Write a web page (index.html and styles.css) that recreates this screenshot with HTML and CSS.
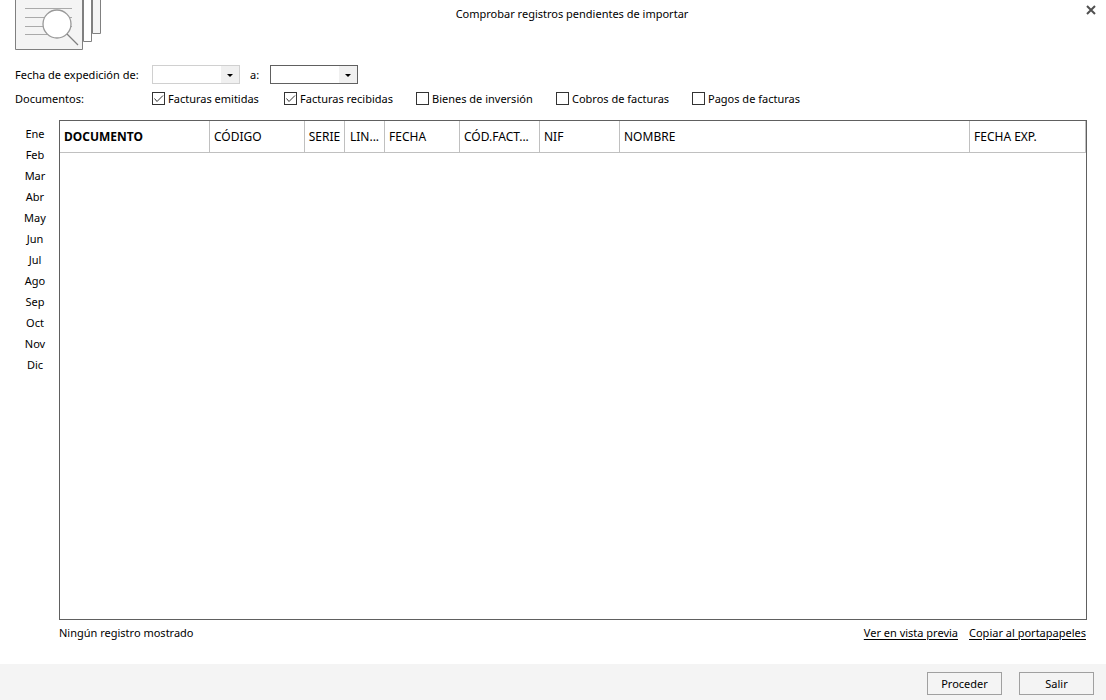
FILE: index.html
```
<!DOCTYPE html>
<html lang="es">
<head>
<meta charset="utf-8">
<title>Comprobar registros pendientes de importar</title>
<link rel="stylesheet" href="styles.css">
</head>
<body>
<header class="header">
  <svg class="logo" width="88" height="51" viewBox="0 0 88 51" fill="none" aria-hidden="true">
    <path d="M77.500 -2V33.500H85.500V-2" fill="#f4f4f4" stroke="#808080"/>
    <path d="M68.500 -2V41.500H76.500V-2" fill="#fff" stroke="#808080"/>
    <path d="M0.500 -2V49.500H67.500V-2Z" fill="#f4f4f4" stroke="#808080"/>
    <path d="M10 8.500H57M10 17.500H57M10 26.500H57M10 34.500H42" stroke="#aaa"/>
    <circle cx="42" cy="24" r="14" fill="#fff" stroke="#999" stroke-width="1.300"/>
    <path d="M52 34L63 45" stroke="#808080" stroke-width="1.200"/>
  </svg>
  <h1 class="title">Comprobar registros pendientes de importar</h1>
  <button class="close" type="button" aria-label="Cerrar">
    <svg width="10" height="10" viewBox="0 0 10 10" aria-hidden="true"><path d="M1 1L9 9M9 1L1 9" stroke="#505050" stroke-width="2"/></svg>
  </button>
</header>

<form class="filters">
  <label class="filter-label" for="from">Fecha de expedición de:</label>
  <div class="dates">
    <div class="combo combo-light">
      <input id="from" type="text">
      <button type="button" aria-label="Elegir fecha inicial"><svg width="6" height="3" viewBox="0 0 6 3"><path d="M0 0H6L3 3Z"/></svg></button>
    </div>
    <label class="to-label" for="to">a:</label>
    <div class="combo">
      <input id="to" type="text">
      <button type="button" aria-label="Elegir fecha final"><svg width="6" height="3" viewBox="0 0 6 3"><path d="M0 0H6L3 3Z"/></svg></button>
    </div>
  </div>
  <span class="filter-label">Documentos:</span>
  <div class="checks">
    <label class="check"><input type="checkbox" checked><svg class="tick" viewBox="0 0 13 13"><path d="M2.500 6.500L5 9.500L11 3.500"/></svg>Facturas emitidas</label>
    <label class="check"><input type="checkbox" checked><svg class="tick" viewBox="0 0 13 13"><path d="M2.500 6.500L5 9.500L11 3.500"/></svg>Facturas recibidas</label>
    <label class="check"><input type="checkbox"><svg class="tick" viewBox="0 0 13 13"><path d="M2.500 6.500L5 9.500L11 3.500"/></svg>Bienes de inversión</label>
    <label class="check"><input type="checkbox"><svg class="tick" viewBox="0 0 13 13"><path d="M2.500 6.500L5 9.500L11 3.500"/></svg>Cobros de facturas</label>
    <label class="check"><input type="checkbox"><svg class="tick" viewBox="0 0 13 13"><path d="M2.500 6.500L5 9.500L11 3.500"/></svg>Pagos de facturas</label>
  </div>
</form>

<main class="main">
  <nav class="months" aria-label="Meses">
    <button type="button">Ene</button>
    <button type="button">Feb</button>
    <button type="button">Mar</button>
    <button type="button">Abr</button>
    <button type="button">May</button>
    <button type="button">Jun</button>
    <button type="button">Jul</button>
    <button type="button">Ago</button>
    <button type="button">Sep</button>
    <button type="button">Oct</button>
    <button type="button">Nov</button>
    <button type="button">Dic</button>
  </nav>
  <div class="content">
    <div class="grid">
      <table>
        <colgroup><col class="w-doc"><col class="w-code"><col class="w-small"><col class="w-small"><col class="w-date"><col class="w-medium"><col class="w-medium"><col><col class="w-exp"></colgroup>
        <thead>
          <tr>
            <th class="sorted">DOCUMENTO</th>
            <th>CÓDIGO</th>
            <th class="center">SERIE</th>
            <th class="center">LIN...</th>
            <th>FECHA</th>
            <th>CÓD.FACT...</th>
            <th>NIF</th>
            <th>NOMBRE</th>
            <th>FECHA EXP.</th>
          </tr>
        </thead>
        <tbody></tbody>
      </table>
    </div>
    <div class="status">
      <span class="count">Ningún registro mostrado</span>
      <a href="#">Ver en vista previa</a>
      <a href="#">Copiar al portapapeles</a>
    </div>
  </div>
</main>

<footer class="footer">
  <button type="button">Proceder</button>
  <button type="button">Salir</button>
</footer>
</body>
</html>
```

FILE: styles.css
```
* { box-sizing: border-box; }

body {
  margin: 0;
  min-height: 100vh;
  display: flex;
  flex-direction: column;
  background: #fff;
  color: #000;
  font: 11px/16px "Noto Sans", "Open Sans", sans-serif;
}

button, input { font: inherit; color: inherit; margin: 0; }

/* Header */
.header {
  display: grid;
  grid-template-columns: 100px 1fr 68px;
  align-items: start;
  padding: 0 9px 0 15px;
  margin-bottom: 14px;
}
.logo { display: block; }
.title {
  margin: 0;
  padding-top: 6px;
  font-size: 11px;
  font-weight: 400;
  text-align: center;
}
.close {
  justify-self: end;
  margin-top: 5px;
  padding: 0 1px;
  border: 0;
  background: none;
}
.close svg { display: block; }

/* Filters */
.filters {
  display: grid;
  grid-template-columns: 137px 1fr;
  align-items: center;
  row-gap: 7px;
  padding: 0 15px;
}
.dates { display: flex; align-items: center; }
.to-label { padding-left: 10px; width: 30px; }
.combo {
  display: flex;
  width: 88px;
  height: 19px;
  border: 1px solid #606060;
}
.combo-light { border-color: #d0d0d0; }
.combo input {
  flex: 1;
  min-width: 0;
  padding: 0 3px;
  border: 0;
  outline: 0;
  background: none;
}
.combo button {
  display: flex;
  align-items: center;
  justify-content: center;
  width: 18px;
  padding: 2px 0 0;
  border: 0;
  background: #f0f0f0;
}
.checks { display: flex; }
.check {
  display: flex;
  align-items: flex-start;
  gap: 3px;
  width: 140px;
}
.check:nth-child(-n+2) { width: 132px; }
.check:nth-child(4) { width: 136px; }
.check input {
  appearance: none;
  width: 13px;
  height: 13px;
  margin-top: 1px;
  border: 1px solid #333;
  background: #fff;
}
.tick {
  width: 13px;
  height: 13px;
  margin-top: 1px;
  margin-left: -16px;
  fill: none;
  stroke: #333;
  visibility: hidden;
  pointer-events: none;
}
.check input:checked + .tick { visibility: visible; }

/* Months and records */
.main {
  flex: 1;
  display: flex;
  padding: 13px 19px 0 11px;
}
.months {
  display: flex;
  flex-direction: column;
  width: 48px;
  padding-top: 3px;
}
.months button {
  height: 21px;
  padding: 0;
  border: 0;
  background: none;
}
.content {
  flex: 1;
  min-width: 0;
  display: flex;
  flex-direction: column;
}
.grid { flex: 1; border: 1px solid #606060; }
table {
  width: 100%;
  table-layout: fixed;
  border-collapse: separate;
  border-spacing: 0;
}
th {
  height: 32px;
  padding: 0 4px;
  border-right: 1px solid #c0c0c0;
  border-bottom: 1px solid #c0c0c0;
  font-size: 12px;
  font-weight: 400;
  text-align: left;
  white-space: nowrap;
  overflow: hidden;
}
.sorted { font-weight: 700; }
.center { padding: 0; text-align: center; }
.w-doc { width: 150px; }
.w-code { width: 95px; }
.w-small { width: 40px; }
.w-date { width: 75px; }
.w-medium { width: 80px; }
.w-exp { width: 116px; }

.status {
  display: flex;
  gap: 11px;
  height: 44px;
  padding: 5px 1px 0 0;
}
.count { flex: 1; }
.status a { color: inherit; text-underline-offset: 2px; }

/* Action bar */
.footer {
  display: flex;
  justify-content: flex-end;
  gap: 17px;
  padding: 8px 12px 5px;
  background: #f4f4f4;
}
.footer button {
  width: 75px;
  height: 23px;
  padding: 0;
  border: 1px solid #a0a0a0;
  background: #f4f4f4;
}
```
